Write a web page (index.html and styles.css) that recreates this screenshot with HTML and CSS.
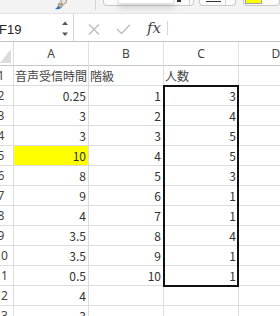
FILE: index.html
```html
<!DOCTYPE html>
<html lang="ja">
<head>
    <meta charset="UTF-8">
    <title>Sheet1</title>
    <link rel="stylesheet" href="styles.css">
</head>
<body>
    <div class="ribbon">
        <span class="brush">
            <svg width="14" height="10" viewBox="0 0 14 10">
                <path d="M6 -2 L13 -2 L12 3 L8 5 Z" fill="#e9e4da" stroke="#8a8072" stroke-width="0.8"/>
                <path d="M5 3 L9 5 L7 8 L4 6 Z" fill="#c7b79a" stroke="#7a6e5c" stroke-width="0.6"/>
                <path d="M4 6 L7 8 Q5 10 1 9 Q3 8 4 6 Z" fill="#2e6fd0"/>
            </svg>
        </span>
        <span class="sep"></span>
        <span class="btn btn-font">
            <span class="popup"></span>
            <span class="bar bar-small"></span>
            <span class="split"></span>
        </span>
        <span class="btn btn-border">
            <span class="bar bar-line"></span>
            <span class="split"></span>
        </span>
        <span class="btn btn-fill">
            <span class="swatch"></span>
        </span>
    </div>

    <div class="formula-bar">
        <div class="name-box">
            <span class="cell-ref">F19</span>
            <svg class="spin" width="8" height="16" viewBox="0 0 8 16">
                <path d="M1 4 L4 0.5 L7 4 Z" fill="#555"/>
                <path d="M1 11.5 L4 15 L7 11.5 Z" fill="#555"/>
            </svg>
        </div>
        <div class="fx-tools">
            <svg class="tool" width="12" height="11" viewBox="0 0 12 11">
                <path d="M1 0.5 L11 10.5 M11 0.5 L1 10.5" stroke="#bdbdbd" stroke-width="1.4" fill="none"/>
            </svg>
            <svg class="tool tool-ok" width="15" height="11" viewBox="0 0 15 11">
                <path d="M1 5 L5.5 9.5 L14 0.8" stroke="#bdbdbd" stroke-width="1.4" fill="none"/>
            </svg>
            <span class="fx">fx</span>
            <span class="fx-sep"></span>
        </div>
        <div class="formula-input"></div>
    </div>

    <div class="sheet">
        <div class="corner"><span class="corner-mark"></span></div>
        <div class="col-head">A</div>
        <div class="col-head">B</div>
        <div class="col-head">C</div>
        <div class="col-head">D</div>

        <div class="row-head">1</div>
        <div class="cell text">音声受信時間</div>
        <div class="cell text">階級</div>
        <div class="cell text">人数</div>
        <div class="cell"></div>

        <div class="row-head">2</div>
        <div class="cell">0.25</div>
        <div class="cell">1</div>
        <div class="cell">3</div>
        <div class="cell"></div>

        <div class="row-head">3</div>
        <div class="cell">3</div>
        <div class="cell">2</div>
        <div class="cell">4</div>
        <div class="cell"></div>

        <div class="row-head">4</div>
        <div class="cell">3</div>
        <div class="cell">3</div>
        <div class="cell">5</div>
        <div class="cell"></div>

        <div class="row-head">5</div>
        <div class="cell highlight">10</div>
        <div class="cell">4</div>
        <div class="cell">5</div>
        <div class="cell"></div>

        <div class="row-head">6</div>
        <div class="cell">8</div>
        <div class="cell">5</div>
        <div class="cell">3</div>
        <div class="cell"></div>

        <div class="row-head">7</div>
        <div class="cell">9</div>
        <div class="cell">6</div>
        <div class="cell">1</div>
        <div class="cell"></div>

        <div class="row-head">8</div>
        <div class="cell">4</div>
        <div class="cell">7</div>
        <div class="cell">1</div>
        <div class="cell"></div>

        <div class="row-head">9</div>
        <div class="cell">3.5</div>
        <div class="cell">8</div>
        <div class="cell">4</div>
        <div class="cell"></div>

        <div class="row-head">10</div>
        <div class="cell">3.5</div>
        <div class="cell">9</div>
        <div class="cell">1</div>
        <div class="cell"></div>

        <div class="row-head">11</div>
        <div class="cell">0.5</div>
        <div class="cell">10</div>
        <div class="cell">1</div>
        <div class="cell"></div>

        <div class="row-head">12</div>
        <div class="cell">4</div>
        <div class="cell"></div>
        <div class="cell"></div>
        <div class="cell"></div>

        <div class="row-head">13</div>
        <div class="cell">3</div>
        <div class="cell"></div>
        <div class="cell"></div>
        <div class="cell"></div>

        <!-- outline border around C2:C11 -->
        <div class="range-box"></div>
    </div>
</body>
</html>
```

FILE: styles.css
```css
* {
    box-sizing: border-box;
}
body {
    margin: 0;
    width: 280px;
    height: 316px;
    overflow: hidden;
    background: #fff;
    font-family: "Noto Sans CJK JP", "Noto Sans", sans-serif;
}

/* ribbon strip (bottom edge of the toolbar) */
.ribbon {
    display: flex;
    align-items: flex-start;
    height: 14px;
    background: #f3f3f3;
    border-bottom: 1px solid #e4e4e4;
    overflow: hidden;
}
.brush {
    display: block;
    width: 14px;
    height: 10px;
    margin-left: 54px;
}
.brush svg {
    display: block;
}
.sep {
    width: 1px;
    height: 10px;
    margin-left: 27px;
    background: #d3d3d3;
}
.btn {
    position: relative;
    display: flex;
    align-items: flex-start;
    height: 6px;
    border: 1px solid #c9c9c9;
    border-top: none;
    border-radius: 0 0 4px 4px;
    background: #fbfbfb;
}
.btn-font {
    width: 98px;
    margin-left: 7px;
}
.btn-border {
    width: 39px;
    margin-left: 5px;
}
.btn-fill {
    width: 40px;
    margin-left: 7px;
}
.popup {
    position: absolute;
    left: 14px;
    top: 0;
    width: 56px;
    height: 4px;
    background: #fff;
    border: 1px solid #e0e0e0;
    border-top: none;
    box-shadow: 0 3px 6px rgba(0, 0, 0, 0.22);
}
.bar {
    height: 2px;
    background: #333;
}
.bar-small {
    width: 4px;
    margin-left: 73px;
}
.bar-line {
    width: 15px;
    margin-left: 6px;
    height: 1px;
    margin-top: 1px;
}
.split {
    width: 1px;
    height: 5px;
    background: #d3d3d3;
}
.btn-font .split {
    margin-left: 8px;
}
.btn-border .split {
    margin-left: 4px;
}
.swatch {
    width: 17px;
    height: 4px;
    margin-left: 1px;
    background: #ffff00;
    border: 1px solid #a0a0a0;
    border-top: none;
}

/* formula bar */
.formula-bar {
    display: flex;
    height: 28px;
    border-bottom: 1px solid #c4c4c4;
    background: #fff;
}
.name-box {
    display: flex;
    align-items: center;
    width: 74px;
    border-right: 1px solid #d6d6d6;
}
.cell-ref {
    width: 62px;
    padding-top: 3px;
    font-family: "Liberation Sans", Arial, sans-serif;
    font-size: 13px;
    color: #222;
    margin-left: -1px;
}
.spin {
    display: block;
    margin-top: 2px;
}
.fx-tools {
    display: flex;
    align-items: center;
    padding-top: 3px;
}
.tool {
    display: block;
    margin-left: 14px;
}
.tool-ok {
    margin-left: 16px;
}
.fx {
    margin-left: 16px;
    font-family: "DejaVu Serif", "Liberation Serif", serif;
    font-style: italic;
    font-size: 15px;
    color: #444;
    margin-top: -3px;
}
.fx-sep {
    width: 1px;
    height: 14px;
    margin-left: 6px;
    margin-top: -2px;
    background: #d6d6d6;
}
.formula-input {
    flex: 1;
}

/* worksheet grid */
.sheet {
    position: relative;
    display: grid;
    grid-template-columns: 27px 75px 75px 75px 75px;
    grid-template-rows: 24px;
    grid-auto-rows: 20px;
    margin-left: -13px;
    font-size: 12px;
    line-height: 1;
    color: #333;
}
.corner, .col-head, .row-head, .cell {
    display: flex;
    align-items: center;
    border-right: 1px solid #dcdcdc;
    border-bottom: 1px solid #dcdcdc;
    overflow: hidden;
    white-space: nowrap;
}
.corner {
    justify-content: flex-end;
    align-items: flex-end;
    padding: 0 2px 2px 0;
    border-bottom-color: #c6c6c6;
}
.corner-mark {
    width: 11px;
    height: 14px;
    background: linear-gradient(to bottom right, transparent 50%, #dcdcdc 50%);
}
.col-head {
    justify-content: center;
    padding-top: 1px;
    color: #444;
    font-family: "Noto Sans", sans-serif;
    font-size: 12px;
    border-bottom-color: #c6c6c6;
    border-right-color: #e2e2e2;
}
.row-head {
    justify-content: center;
    color: #444;
    font-family: "Noto Sans", sans-serif;
    font-size: 12px;
    padding-left: 2px;
}
.cell {
    justify-content: flex-end;
    padding: 1px 2px 0 1px;
}
.cell.text {
    justify-content: flex-start;
    color: #444;
}
.highlight {
    background: #ffff00;
}
/* selection outline drawn over the cells, not part of auto placement */
.range-box {
    position: absolute;
    grid-column: 4 / 5;
    grid-row: 3 / 13;
    top: -1px;
    left: -1px;
    right: 0;
    bottom: -1px;
    border: 2px solid #111;
    pointer-events: none;
}
```
